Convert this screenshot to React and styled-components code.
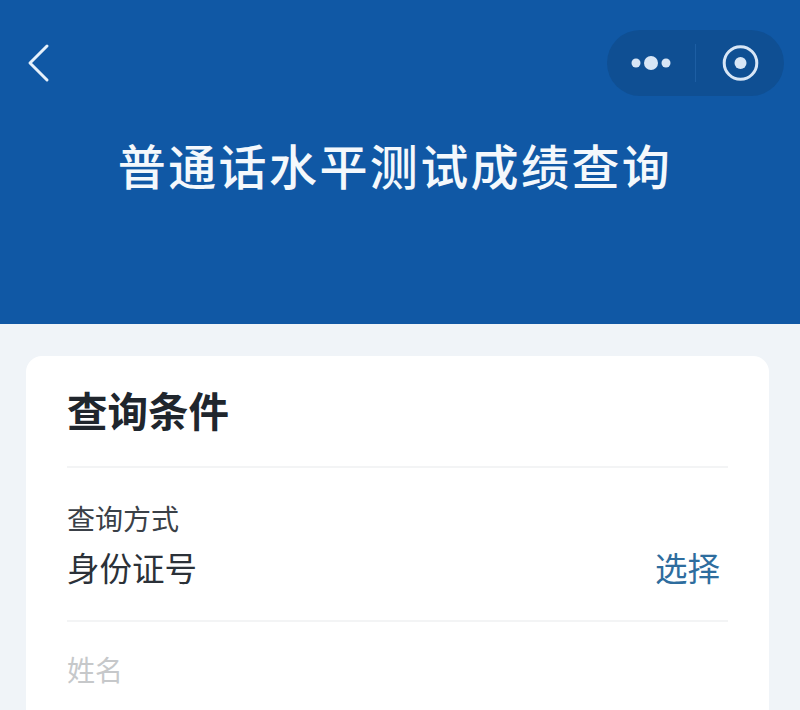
import React from 'react'
import styled, { createGlobalStyle } from 'styled-components'

const GlobalStyle = createGlobalStyle`
  html, body {
    margin: 0;
    height: 710px;
    overflow: hidden;
    background: #f0f4f8;
    font-family: "Noto Sans CJK SC", "Noto Sans", sans-serif;
  }
`
const Page = styled.div`
  width: 800px;
  height: 710px;
  overflow: hidden;
`
const Header = styled.header`
  height: 324px;
  box-sizing: border-box;
  padding: 30px 16px 0 26px;
  background: #1058a5;
`
const NavBar = styled.div`
  display: flex;
  align-items: center;
  justify-content: space-between;
  height: 66px;
`
const Capsule = styled.div`
  display: flex;
  align-items: center;
  width: 177px;
  height: 66px;
  border-radius: 33px;
  background: #0f4f93;
`
const CapsuleSlot = styled.div`
  flex: 1;
  display: flex;
  align-items: center;
  justify-content: center;
`
const CapsuleLine = styled.div`
  width: 1px;
  height: 38px;
  background: #1d5ea3;
`
const Title = styled.h1`
  margin: 30px 0 0;
  padding-right: 20px;
  text-align: center;
  white-space: nowrap;
  color: #f4f8fc;
  font-size: 48px;
  line-height: 76px;
  font-weight: 500;
  letter-spacing: 2.4px;
`
const Body = styled.main`
  padding: 32px 31px 0 26px;
`
const Card = styled.section`
  padding: 0 41px;
  border-radius: 16px;
  background: #fff;
`
const CardTitle = styled.h2`
  margin: 0;
  height: 112px;
  box-sizing: border-box;
  padding-top: 26px;
  border-bottom: 2px solid #f3f4f5;
  color: #20262d;
  font-size: 40.5px;
  line-height: 56px;
  font-weight: 700;
`
const Row = styled.div`
  height: 154px;
  box-sizing: border-box;
  padding-top: 29px;
  border-bottom: 2px solid #f3f4f5;
`
const Label = styled.div`
  color: #3a4047;
  font-size: 28px;
  line-height: 42px;
`
const ValueRow = styled.div`
  display: flex;
  justify-content: space-between;
  padding-right: 8px;
  margin-top: 4px;
  font-size: 32.5px;
  line-height: 48px;
`
const Value = styled.span`
  color: #2b3138;
`
const Action = styled.span`
  color: #2e6d9e;
`
const Field = styled.div`
  padding-top: 25px;
`
const FieldLabel = styled.div`
  color: #c6c8ca;
  font-size: 28px;
  line-height: 44px;
`
const Placeholder = styled.div`
  margin-top: 13px;
  color: #e6e7e8;
  font-size: 24px;
  line-height: 36px;
`

const BackIcon = () => (
  <svg width="24" height="40" viewBox="0 0 24 40" fill="none">
    <path d="M21 3 L4 20 L21 37" stroke="#e6f1fb" strokeWidth="3" strokeLinecap="round" strokeLinejoin="round" />
  </svg>
)

const MoreIcon = () => (
  <svg width="42" height="20" viewBox="0 0 42 20" fill="#d8e6f6">
    <circle cx="6" cy="10" r="4.500" />
    <circle cx="21" cy="10" r="7" />
    <circle cx="36" cy="10" r="4.500" />
  </svg>
)

const TargetIcon = () => (
  <svg width="40" height="40" viewBox="0 0 40 40" fill="none">
    <circle cx="20.500" cy="20" r="16.300" stroke="#d8e6f6" strokeWidth="3" />
    <circle cx="20.500" cy="20" r="6" fill="#d8e6f6" />
  </svg>
)

export default function App() {
  return (
    <Page>
      <GlobalStyle />
      <Header>
        <NavBar>
          <BackIcon />
          <Capsule>
            <CapsuleSlot>
              <MoreIcon />
            </CapsuleSlot>
            <CapsuleLine />
            <CapsuleSlot>
              <TargetIcon />
            </CapsuleSlot>
          </Capsule>
        </NavBar>
        <Title>普通话水平测试成绩查询</Title>
      </Header>
      <Body>
        <Card>
          <CardTitle>查询条件</CardTitle>
          <Row>
            <Label>查询方式</Label>
            <ValueRow>
              <Value>身份证号</Value>
              <Action>选择</Action>
            </ValueRow>
          </Row>
          <Field>
            <FieldLabel>姓名</FieldLabel>
            <Placeholder>请输入考生姓名</Placeholder>
          </Field>
        </Card>
      </Body>
    </Page>
  )
}
